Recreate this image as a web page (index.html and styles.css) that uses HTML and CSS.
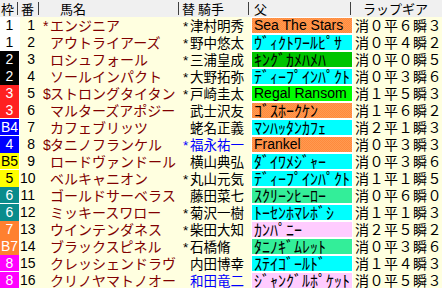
FILE: index.html
```html
<!DOCTYPE html>
<html lang="ja">
<head>
<meta charset="utf-8">
<link rel="stylesheet" href="styles.css">
</head>
<body>
<div class="table">
  <div class="row head">
    <div class="c hwaku">枠</div>
    <div class="c hnum">番</div>
    <div class="c hname">馬名</div>
    <div class="c hjockey">替 騎手</div>
    <div class="c hsire">父</div>
    <div class="c hlap">ラップギア</div>
  </div>

  <div class="row">
    <div class="c waku w1">1</div><div class="c num">1</div>
    <div class="c name"><span class="mk">*</span>エンジニア</div>
    <div class="c jockey"><span class="mk">*</span>津村明秀</div>
    <div class="c sire"><span class="sb orange lat">Sea The Stars</span></div>
    <div class="c lap">消０平６瞬３</div>
  </div>
  <div class="row">
    <div class="c waku w1">1</div><div class="c num">2</div>
    <div class="c name"><span class="mk"></span>アウトライアーズ</div>
    <div class="c jockey"><span class="mk">*</span>野中悠太</div>
    <div class="c sire"><span class="sb cyan">ｳﾞｨｸﾄﾜｰﾙﾋﾟｻ</span></div>
    <div class="c lap">消０平４瞬２</div>
  </div>
  <div class="row">
    <div class="c waku w2">2</div><div class="c num">3</div>
    <div class="c name"><span class="mk"></span>ロシュフォール</div>
    <div class="c jockey"><span class="mk">*</span>三浦皇成</div>
    <div class="c sire"><span class="sb green">ｷﾝｸﾞｶﾒﾊﾒﾊ</span></div>
    <div class="c lap">消０平０瞬５</div>
  </div>
  <div class="row">
    <div class="c waku w2">2</div><div class="c num">4</div>
    <div class="c name"><span class="mk"></span>ソールインパクト</div>
    <div class="c jockey"><span class="mk">*</span>大野拓弥</div>
    <div class="c sire"><span class="sb cyan">ﾃﾞｨｰﾌﾟｲﾝﾊﾟｸﾄ</span></div>
    <div class="c lap">消０平３瞬６</div>
  </div>
  <div class="row">
    <div class="c waku w3">3</div><div class="c num">5</div>
    <div class="c name"><span class="mk">$</span>ストロングタイタン</div>
    <div class="c jockey"><span class="mk">*</span>戸崎圭太</div>
    <div class="c sire"><span class="sb lime lat">Regal Ransom</span></div>
    <div class="c lap">消１平５瞬３</div>
  </div>
  <div class="row">
    <div class="c waku w3">3</div><div class="c num">6</div>
    <div class="c name"><span class="mk"></span>マルターズアポジー</div>
    <div class="c jockey"><span class="mk"></span>武士沢友</div>
    <div class="c sire"><span class="sb orange">ｺﾞｽﾎｰｸｹﾝ</span></div>
    <div class="c lap">消１平６瞬２</div>
  </div>
  <div class="row">
    <div class="c waku w4">B4</div><div class="c num">7</div>
    <div class="c name"><span class="mk"></span>カフェブリッツ</div>
    <div class="c jockey"><span class="mk"></span>蛯名正義</div>
    <div class="c sire"><span class="sb cyan">ﾏﾝﾊｯﾀﾝｶﾌｪ</span></div>
    <div class="c lap">消２平１瞬３</div>
  </div>
  <div class="row">
    <div class="c waku w4">4</div><div class="c num">8</div>
    <div class="c name"><span class="mk">$</span>タニノフランケル</div>
    <div class="c jockey blue"><span class="mk">*</span>福永祐一</div>
    <div class="c sire"><span class="sb orange lat">Frankel</span></div>
    <div class="c lap">消０平３瞬３</div>
  </div>
  <div class="row">
    <div class="c waku w5">B5</div><div class="c num">9</div>
    <div class="c name"><span class="mk"></span>ロードヴァンドール</div>
    <div class="c jockey"><span class="mk"></span>横山典弘</div>
    <div class="c sire"><span class="sb cyan">ﾀﾞｲﾜﾒｼﾞｬｰ</span></div>
    <div class="c lap">消０平３瞬６</div>
  </div>
  <div class="row">
    <div class="c waku w5">5</div><div class="c num">10</div>
    <div class="c name"><span class="mk"></span>ベルキャニオン</div>
    <div class="c jockey"><span class="mk">*</span>丸山元気</div>
    <div class="c sire"><span class="sb cyan">ﾃﾞｨｰﾌﾟｲﾝﾊﾟｸﾄ</span></div>
    <div class="c lap">消１平１瞬５</div>
  </div>
  <div class="row">
    <div class="c waku w6">6</div><div class="c num">11</div>
    <div class="c name"><span class="mk"></span>ゴールドサーベラス</div>
    <div class="c jockey"><span class="mk"></span>藤田菜七</div>
    <div class="c sire"><span class="sb mint">ｽｸﾘｰﾝﾋｰﾛｰ</span></div>
    <div class="c lap">消０平６瞬０</div>
  </div>
  <div class="row">
    <div class="c waku w6">6</div><div class="c num">12</div>
    <div class="c name"><span class="mk"></span>ミッキースワロー</div>
    <div class="c jockey"><span class="mk">*</span>菊沢一樹</div>
    <div class="c sire"><span class="sb cyan">ﾄｰｾﾝﾎﾏﾚﾎﾞｼ</span></div>
    <div class="c lap">消１平１瞬３</div>
  </div>
  <div class="row">
    <div class="c waku w7">7</div><div class="c num">13</div>
    <div class="c name"><span class="mk"></span>ウインテンダネス</div>
    <div class="c jockey"><span class="mk">*</span>柴田大知</div>
    <div class="c sire"><span class="sb pink">ｶﾝﾊﾟﾆｰ</span></div>
    <div class="c lap">消２平５瞬２</div>
  </div>
  <div class="row">
    <div class="c waku w7">B7</div><div class="c num">14</div>
    <div class="c name"><span class="mk"></span>ブラックスピネル</div>
    <div class="c jockey"><span class="mk">*</span>石橋脩</div>
    <div class="c sire"><span class="sb mint">ﾀﾆﾉｷﾞﾑﾚｯﾄ</span></div>
    <div class="c lap">消０平３瞬６</div>
  </div>
  <div class="row">
    <div class="c waku w8">8</div><div class="c num">15</div>
    <div class="c name"><span class="mk"></span>クレッシェンドラヴ</div>
    <div class="c jockey"><span class="mk"></span>内田博幸</div>
    <div class="c sire"><span class="sb cyan">ｽﾃｲｺﾞｰﾙﾄﾞ</span></div>
    <div class="c lap">消１平４瞬３</div>
  </div>
  <div class="row">
    <div class="c waku w8">8</div><div class="c num">16</div>
    <div class="c name"><span class="mk"></span>クリノヤマトノオー</div>
    <div class="c jockey blue"><span class="mk"></span>和田竜二</div>
    <div class="c sire"><span class="sb pink">ｼﾞｬﾝｸﾞﾙﾎﾟｹｯﾄ</span></div>
    <div class="c lap">消０平５瞬３</div>
  </div>
</div>
</body>
</html>
```

FILE: styles.css
```css
html, body {
  margin: 0;
  padding: 0;
  background: #ffffff;
  overflow: hidden;
}
.table {
  width: 442px;
  font-family: "Liberation Sans", "Noto Sans CJK JP", sans-serif;
  font-size: 14px;
  color: #000;
}
.row {
  display: grid;
  grid-template-columns: 20px 21px 140px 70px 102px 89px;
  height: 17px;
  line-height: 17px;
  background: #ffffe0;
}
.c {
  white-space: nowrap;
  overflow-x: clip;
}
.head {
  background: #f0f0f0;
}
.head .c {
  background: linear-gradient(#404040, #404040) right 2px top 2px / 1px 13px no-repeat;
  font-family: "Noto Sans CJK JP", sans-serif;
  font-size: 13px;
  color: #000;
}
.head .hlap { background: none; padding-left: 10px; }
.hwaku { padding-left: 1px; }
.hnum { padding-left: 1px; }
.hname { padding-left: 19px; }
.hjockey { padding-left: 1px; }
.hsire { padding-left: 3px; }

.waku {
  text-align: center;
  box-sizing: border-box;
  border-bottom: 1px solid #fff;
  border-right: 1px solid #fff;
  line-height: 16px;
  color: #fff;
}
.w1 { background: #fff; color: #000; }
.w2 { background: #000; }
.w3 { background: #ff2020; }
.w4 { background: #0000ff; }
.w5 { background: #ffff00; color: #000; }
.w6 { background: #0a8c8c; }
.w7 { background: #ff8030; }
.w8 { background: #ff00ff; }

.num {
  text-align: right;
  padding-right: 6px;
}
.name {
  padding-left: 2px;
  color: #800000;
  font-family: "Noto Sans CJK JP", sans-serif;
}
.mk {
  display: inline-block;
  width: 7px;
  font-family: "Liberation Sans", sans-serif;
}
.jockey {
  padding-left: 2px;
  font-family: "Noto Sans CJK JP", sans-serif;
  font-size: 13.5px;
}
.blue { color: #0000ff; }
.sire {
  background: #fff;
  padding: 1px;
  box-sizing: border-box;
}
.sb {
  display: block;
  height: 15px;
  line-height: 15px;
  padding-left: 2px;
  font-family: "Noto Sans CJK JP", sans-serif;
  font-size: 16px;
  overflow-x: clip;
}
.sb.lat {
  font-family: "Liberation Sans", sans-serif;
  font-size: 14px;
}
.orange { background: repeating-conic-gradient(#ff8a3c 0 25%, #ff9a52 0 50%) 0 0 / 2px 2px; }
.cyan { background: #00ffff; }
.green { background: #00c400; }
.lime { background: #00ff00; }
.mint { background: #33ee99; }
.pink { background: #ffccff; }
.lap {
  padding-left: 2px;
  font-family: "Noto Sans CJK JP", sans-serif;
  letter-spacing: 0.5px;
}
```
